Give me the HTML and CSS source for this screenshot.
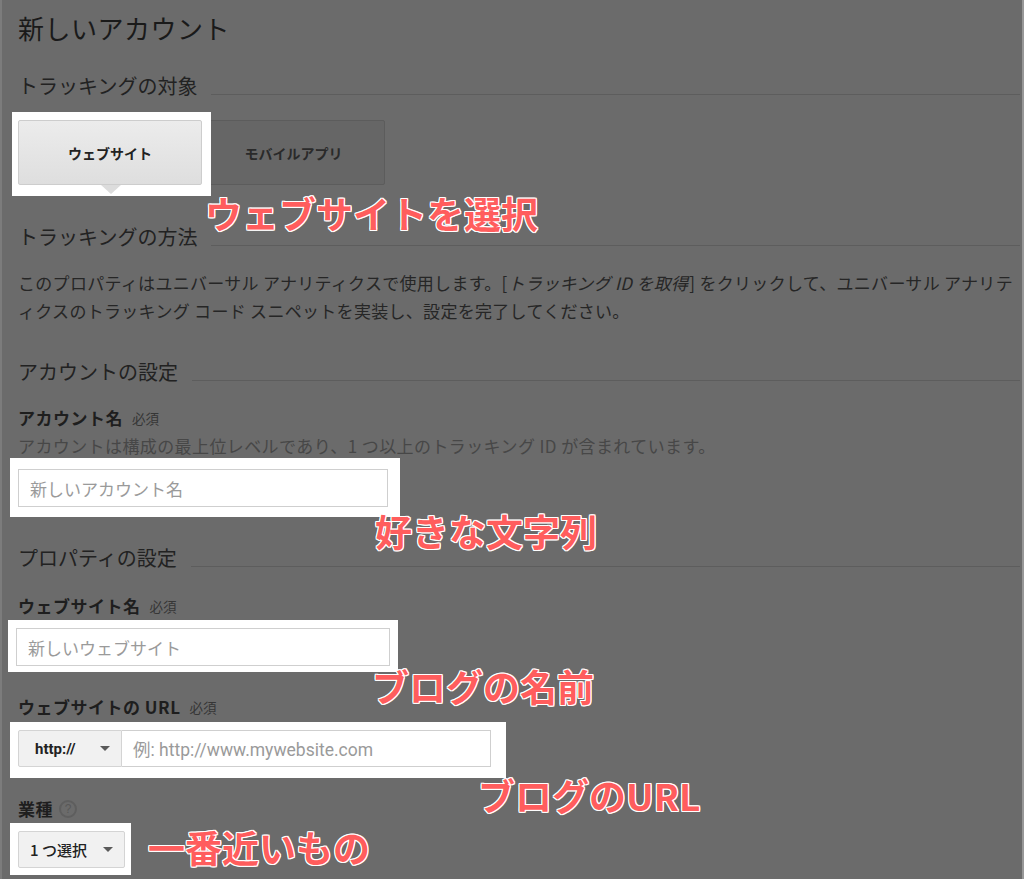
FILE: index.html
```html
<!DOCTYPE html>
<html lang="ja">
<head>
<meta charset="utf-8">
<title>新しいアカウント</title>
<link rel="stylesheet" href="styles.css">
</head>
<body>
<div class="page">
  <h1 class="title">新しいアカウント</h1>

  <div class="sec-head sec-target"><span>トラッキングの対象</span></div>
  <div class="segment">
    <div class="hl-seg"><button class="seg seg-on">ウェブサイト</button></div>
    <button class="seg seg-off">モバイルアプリ</button>
  </div>

  <div class="sec-head sec-method"><span>トラッキングの方法</span></div>
  <p class="para">このプロパティはユニバーサル アナリティクスで使用します。[<em>トラッキング ID を取得</em>] をクリックして、ユニバーサル アナリティクスのトラッキング コード スニペットを実装し、設定を完了してください。</p>

  <div class="sec-head sec-account"><span>アカウントの設定</span></div>
  <div class="label lbl-account">アカウント名<span class="req">必須</span></div>
  <div class="desc">アカウントは構成の最上位レベルであり、1 つ以上のトラッキング ID が含まれています。</div>
  <div class="hl hl-account"><div class="input w-account">新しいアカウント名</div></div>

  <div class="sec-head sec-property"><span>プロパティの設定</span></div>
  <div class="label lbl-site">ウェブサイト名<span class="req">必須</span></div>
  <div class="hl hl-site"><div class="input w-site">新しいウェブサイト</div></div>

  <div class="label lbl-url">ウェブサイトの URL<span class="req">必須</span></div>
  <div class="hl hl-url">
    <div class="select sel-proto">http://<i class="caret"></i></div>
    <div class="input w-url">例: http://www.mywebsite.com</div>
  </div>

  <div class="label lbl-ind">業種<span class="help">?</span></div>
  <div class="hl hl-ind">
    <div class="select sel-ind">1 つ選択<i class="caret"></i></div>
  </div>

  <div class="note n1">ウェブサイトを選択</div>
  <div class="note n2">好きな文字列</div>
  <div class="note n3">ブログの名前</div>
  <div class="note n4">ブログのURL</div>
  <div class="note n5">一番近いもの</div>
</div>
</body>
</html>
```

FILE: styles.css
```css
html, body {
  margin: 0;
  padding: 0;
  background: #6b6b6b;
}
body {
  font-family: "Noto Sans CJK JP", "Noto Sans", sans-serif;
  color: #1e1e1e;
}
.page {
  position: relative;
  height: 879px;
  box-sizing: border-box;
  border-left: 2px solid #7c7c7c;
  border-right: 2px solid #979797;
  padding: 12px 2px 0 16px;
  overflow: hidden;
}
.title {
  margin: 0;
  font-size: 26px;
  line-height: 32px;
  font-weight: 400;
  letter-spacing: 0.5px;
  color: #1a1a1a;
}
.sec-head {
  display: flex;
  align-items: center;
  gap: 14px;
  font-size: 20px;
  line-height: 26px;
  color: #222;
}
.sec-head::after {
  content: "";
  flex: 1;
  height: 1px;
  margin-top: 16px;
  background: #5d5d5d;
}
.sec-target { margin-top: 29px; }
.sec-method { margin-top: 39px; }
.sec-account { margin-top: 34px; }
.sec-property { margin-top: 28px; }

.segment {
  display: flex;
  margin-top: 21px;
}
.hl-seg {
  position: relative;
  z-index: 1;
  background: #fff;
  padding: 8px 9px 11px 6px;
  margin: -8px -9px -11px -6px;
}
.seg {
  font-family: inherit;
  font-size: 14px;
  font-weight: 700;
  height: 65px;
  border-radius: 2px;
  padding: 0;
  margin: 0;
}
.seg-on {
  position: relative;
  width: 184px;
  color: #222;
  background: linear-gradient(#ececec, #dedede);
  border: 1px solid #cdcdcd;
}
.seg-on::after {
  content: "";
  position: absolute;
  left: 82px;
  bottom: -10px;
  border-left: 10px solid transparent;
  border-right: 10px solid transparent;
  border-top: 9px solid #dcdcdc;
}
.seg-off {
  width: 183px;
  color: #2a2a2a;
  background: #666;
  border: 1px solid #5c5c5c;
}

.para {
  margin: 19px 0 0;
  font-size: 17px;
  line-height: 28px;
  letter-spacing: 0.3px;
  color: #262626;
}
.para em { font-style: italic; padding-right: 1px; }

.label {
  display: flex;
  align-items: center;
  font-size: 17px;
  line-height: 22px;
  letter-spacing: 0.5px;
  font-weight: 700;
  color: #1e1e1e;
}
.req {
  font-size: 13.5px;
  font-weight: 400;
  letter-spacing: 0;
  color: #363636;
  margin-left: 9px;
}
.lbl-account { margin-top: 22px; }
.lbl-site { margin-top: 24px; }
.lbl-url { margin-top: 24px; }
.lbl-ind { margin-top: 20px; }
.desc {
  margin-top: 6px;
  font-size: 17px;
  line-height: 22px;
  letter-spacing: 0.4px;
  color: #474747;
}
.help {
  box-sizing: border-box;
  width: 18px;
  height: 18px;
  margin-left: 6px;
  border-radius: 50%;
  border: 2px solid #5e5e5e;
  font-size: 12px;
  line-height: 14px;
  text-align: center;
  color: #585858;
  font-family: "Liberation Sans", sans-serif;
  font-weight: 400;
  letter-spacing: 0;
}

.hl {
  display: flex;
  width: fit-content;
  background: #fff;
}
.hl-account { margin: 1px 0 0 -8px; padding: 11px 12px 10px 8px; }
.hl-site { margin: 3px 0 0 -10px; padding: 8px 8px 6px 8px; }
.hl-url { margin: 4px 0 0 -8px; padding: 8px 15px 11px 8px; }
.hl-ind { margin: 3px 0 0 -8px; padding: 8px 6px 7px 8px; }

.input {
  box-sizing: border-box;
  height: 38px;
  border: 1px solid #cfcfcf;
  padding: 0 11px;
  display: flex;
  align-items: center;
  font-size: 17px;
  color: #9a9a9a;
  background: #fff;
}
.w-account { width: 370px; }
.w-site { width: 374px; }
.w-url {
  width: 369px;
  height: 37px;
  font-family: Roboto, "Noto Sans CJK JP", sans-serif;
  font-size: 17.5px;
  border-left: none;
}

.select {
  box-sizing: border-box;
  height: 37px;
  display: flex;
  align-items: center;
  justify-content: space-between;
  background: #f1f1f1;
  border: 1px solid #d4d4d4;
  border-radius: 2px;
  font-size: 14px;
  font-weight: 700;
  color: #222;
  padding: 0 11px 0 12px;
}
.sel-proto {
  width: 104px;
  padding-left: 16px;
  font-size: 15px;
  font-family: Roboto, "Liberation Sans", sans-serif;
  border-radius: 2px 0 0 2px;
}
.sel-ind {
  width: 107px;
  font-weight: 500;
  font-size: 15px;
  padding-left: 11px;
}
.caret {
  width: 0;
  height: 0;
  border-left: 5px solid transparent;
  border-right: 5px solid transparent;
  border-top: 5px solid #5a5a5a;
}

.note {
  position: absolute;
  font-size: 37px;
  line-height: 37px;
  font-weight: 700;
  color: #ff5d5d;
  white-space: nowrap;
  text-shadow: 1px 0 0 #fff, -1px 0 0 #fff, 0 1px 0 #fff, 0 -1px 0 #fff,
    1px 1px 0 #fff, -1px -1px 0 #fff, 1px -1px 0 #fff, -1px 1px 0 #fff;
}
.n1 { left: 203px; top: 195px; }
.n2 { left: 373px; top: 513px; }
.n3 { left: 370px; top: 668px; }
.n4 { left: 476px; top: 777px; }
.n5 { left: 146px; top: 829px; }
```
